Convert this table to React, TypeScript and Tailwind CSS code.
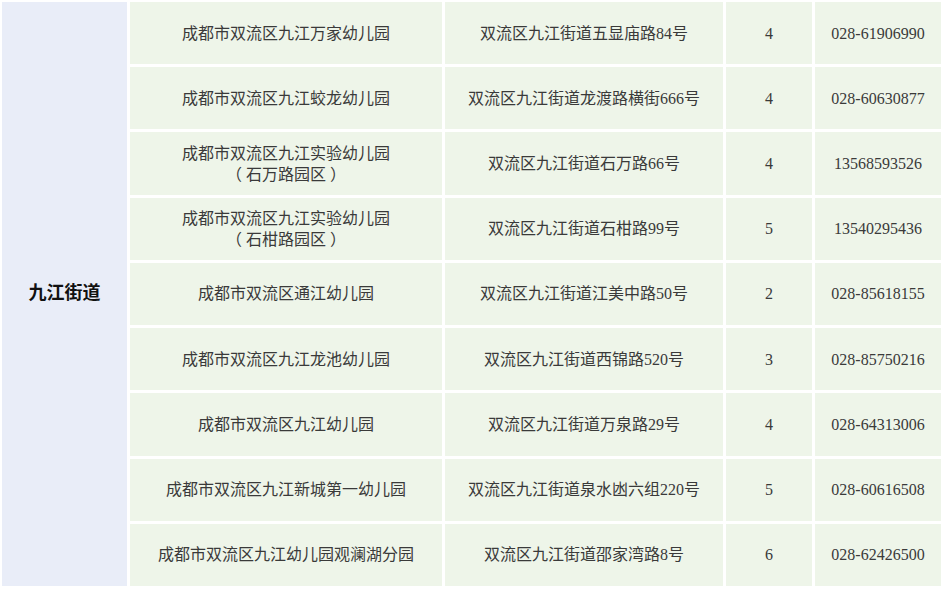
const rows = [
  { name: ["成都市双流区九江万家幼儿园"], addr: "双流区九江街道五显庙路84号", classes: "4", phone: "028-61906990" },
  { name: ["成都市双流区九江蛟龙幼儿园"], addr: "双流区九江街道龙渡路横街666号", classes: "4", phone: "028-60630877" },
  { name: ["成都市双流区九江实验幼儿园", "（ 石万路园区 ）"], addr: "双流区九江街道石万路66号", classes: "4", phone: "13568593526" },
  { name: ["成都市双流区九江实验幼儿园", "（ 石柑路园区 ）"], addr: "双流区九江街道石柑路99号", classes: "5", phone: "13540295436" },
  { name: ["成都市双流区通江幼儿园"], addr: "双流区九江街道江美中路50号", classes: "2", phone: "028-85618155" },
  { name: ["成都市双流区九江龙池幼儿园"], addr: "双流区九江街道西锦路520号", classes: "3", phone: "028-85750216" },
  { name: ["成都市双流区九江幼儿园"], addr: "双流区九江街道万泉路29号", classes: "4", phone: "028-64313006" },
  { name: ["成都市双流区九江新城第一幼儿园"], addr: "双流区九江街道泉水凼六组220号", classes: "5", phone: "028-60616508" },
  { name: ["成都市双流区九江幼儿园观澜湖分园"], addr: "双流区九江街道邵家湾路8号", classes: "6", phone: "028-62426500" },
];

const cell = "flex flex-col items-center justify-center bg-[#eef5e9] text-center leading-[21px]";

export default function App() {
  return (
    <div className="h-[589px] w-[944px] bg-white p-[2px] font-['Liberation_Serif','Noto_Sans_CJK_SC',serif] text-[16px] text-[#3a3a3a]">
      <div className="grid h-[584px] grid-cols-[125px_312px_278px_86px_126px] grid-rows-[repeat(9,1fr)] gap-[3px]">
        <div className="row-span-9 flex items-center justify-center bg-[#e9edf8] text-[18px] font-bold text-[#111]">
          九江街道
        </div>
        {rows.map((r) => (
          <div key={r.phone} className="contents">
            <div className={cell}>
              {r.name.map((line) => (
                <span key={line}>{line}</span>
              ))}
            </div>
            <div className={cell}>{r.addr}</div>
            <div className={cell}>{r.classes}</div>
            <div className={cell}>{r.phone}</div>
          </div>
        ))}
      </div>
    </div>
  );
}
